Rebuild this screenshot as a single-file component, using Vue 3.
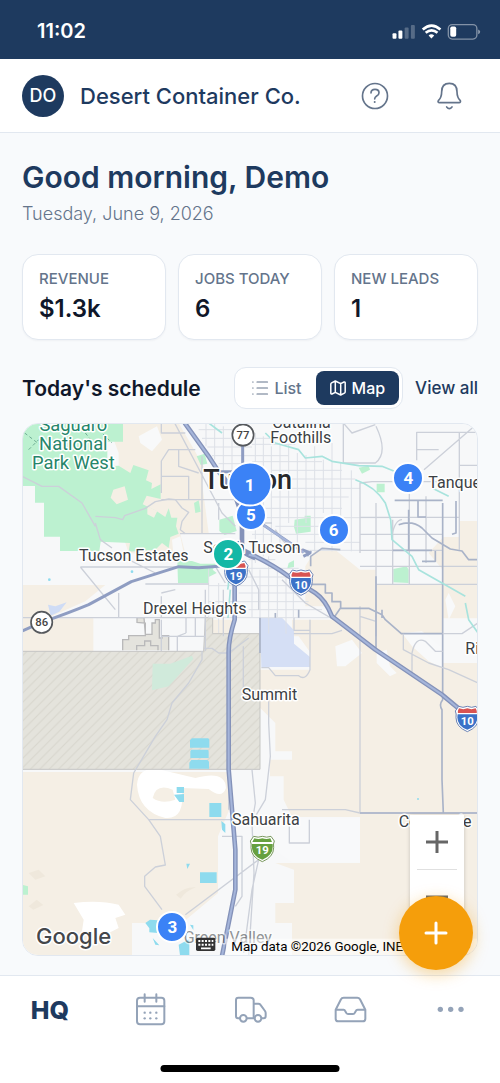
<script setup>
import { ref } from 'vue'

const view = ref('map')

const stats = [
  { label: 'REVENUE', value: '$1.3k' },
  { label: 'JOBS TODAY', value: '6' },
  { label: 'NEW LEADS', value: '1' },
]

// Pin positions are in map units (1368 x 1599).
const pins = [
  { n: 5, x: 687, y: 276 },
  { n: 1, x: 683, y: 183, big: true },
  { n: 2, x: 619, y: 392, done: true },
  { n: 4, x: 1159, y: 164 },
  { n: 6, x: 935, y: 320 },
  { n: 3, x: 451, y: 1512 },
]
const place = (p) => ({
  left: `${((p.x - 3) / 1362) * 100}%`,
  top: `${((p.y - 3) / 1593) * 100}%`,
})

const line = (vertical, at, from, to) =>
  vertical ? `M${at} ${from}V${to}` : `M${from} ${at}H${to}`
// [vertical?, position, from, to]
const streets = [
  [1, 700, 30, 420], [1, 724, 40, 400], [1, 748, 70, 385], [1, 774, 30, 385],
  [1, 800, 64, 300], [1, 826, 90, 385], [1, 852, 96, 300], [1, 878, 70, 385],
  [1, 904, 110, 270], [1, 930, 60, 385], [1, 956, 120, 300], [1, 988, 142, 385],
  [1, 552, 0, 70], [1, 578, 0, 110], [1, 604, 10, 150], [1, 630, 20, 150],
  [0, 20, 530, 690], [0, 46, 540, 760], [0, 72, 556, 690], [0, 98, 570, 800], [0, 122, 590, 690],
  [0, 64, 690, 820], [0, 116, 690, 900], [0, 142, 750, 960], [0, 168, 750, 1000],
  [0, 196, 800, 1014], [0, 222, 750, 980], [0, 256, 720, 960], [0, 284, 690, 1112],
  [0, 310, 760, 960], [0, 334, 690, 900], [0, 358, 850, 1014], [0, 382, 840, 1014],
  [1, 560, 430, 584], [1, 590, 480, 630], [1, 690, 400, 584], [1, 714, 440, 632],
  [1, 740, 400, 632], [1, 766, 430, 584], [1, 792, 460, 632], [1, 814, 490, 584],
  [0, 410, 680, 760], [0, 436, 600, 830], [0, 462, 670, 800], [0, 488, 560, 800],
  [0, 510, 650, 830], [0, 536, 560, 860], [0, 560, 680, 900], [0, 584, 560, 920],
].map((s) => line(...s)).join('')
</script>

<template>
  <div class="app">
    <div class="status">
      <span class="time">11:02</span>
      <svg class="status-icons" viewBox="1170 60 280 64" aria-hidden="true">
        <g fill="#fff">
          <rect x="1176" y="97" width="12" height="17" rx="3" />
          <rect x="1194" y="89" width="12" height="25" rx="3" />
          <rect x="1213" y="80" width="12" height="34" rx="3" opacity=".25" />
          <rect x="1232" y="72" width="12" height="42" rx="3" opacity=".25" />
          <rect x="1352" y="77" width="18" height="31" rx="5" />
          <path d="M1437 86q6 2 6 7t-6 7z" opacity=".5" />
          <path d="M1286 104q8-7 17 0l-8.500 9z" />
        </g>
        <rect x="1346" y="71" width="87" height="44" rx="12" fill="none" stroke="#fff" stroke-opacity=".45" stroke-width="4" />
        <path d="M1268 86q27-24 54 0M1277 96q18-15 36 0" fill="none" stroke="#fff" stroke-width="8" />
      </svg>
    </div>

    <header class="header">
      <span class="avatar">DO</span>
      <span class="company">Desert Container Co.</span>
      <button class="icon-btn" type="button" aria-label="Help">
        <svg viewBox="1080 243 90 90" aria-hidden="true">
          <circle cx="1125" cy="288" r="37.500" />
          <path d="M1113 279q0-11 12-11 12 0 12 10 0 6-7 10-6 4-6 9" />
          <circle class="dot" cx="1124" cy="306" r="3" />
        </svg>
      </button>
      <button class="icon-btn" type="button" aria-label="Notifications">
        <svg viewBox="1302 243 90 90" aria-hidden="true">
          <path d="M1319 308h58q6-1 4-6-10-10-10-27c0-17-9-25-23-25s-23 8-23 25q0 17-10 27-3 5 4 6zM1340 321q8 10 16 0" />
        </svg>
      </button>
    </header>

    <main class="main">
      <h1>Good morning, Demo</h1>
      <p class="date">Tuesday, June 9, 2026</p>

      <section class="stats">
        <div v-for="s in stats" :key="s.label" class="card">
          <span class="label">{{ s.label }}</span>
          <strong class="value">{{ s.value }}</strong>
        </div>
      </section>

      <div class="schedule">
        <h2>Today's schedule</h2>
        <div class="segment">
          <button type="button" :class="{ on: view === 'list' }" :aria-pressed="view === 'list'" @click="view = 'list'">
            <svg viewBox="0 0 16 16" aria-hidden="true">
              <path d="M5 2h10.500M5 8h10.500M5 14h10.500M.7 2h.4M.7 8h.4M.7 14h.4" />
            </svg>
            List
          </button>
          <button type="button" :class="{ on: view === 'map' }" :aria-pressed="view === 'map'" @click="view = 'map'">
            <svg viewBox="0 0 16 16" aria-hidden="true">
              <path d="M.8 4.200q0-1 .8-1.400L5.300 1l5.400 2.600L14 2q1.200-.4 1.200.8V11.800q0 .9-.8 1.300L10.700 15l-5.400-2.600L2 14q-1.200.4-1.200-.8zM5.300 1v11.400M10.700 3.600V15" />
            </svg>
            Map
          </button>
        </div>
        <a href="#all" class="view-all">View all</a>
      </div>

      <section class="map" aria-label="Job map">
        <svg class="map-art" viewBox="3 3 1362 1593" preserveAspectRatio="none">
          <defs>
            <pattern id="hatch" width="28" height="28" patternUnits="userSpaceOnUse">
              <rect width="28" height="28" fill="#e4e3dc" />
              <path d="M-7 7L7-7M0 28L28 0M21 35L35 21" stroke="#d8d6cd" stroke-width="3" />
            </pattern>
            <symbol id="interstate" viewBox="0 0 80 84">
              <path d="M14 4q13 6 26 0 13 6 26 0l10 14q-4 8-2 20 0 28-34 42Q6 66 6 38 8 26 4 18z" fill="#fff" stroke="#6c84b6" stroke-width="3" />
              <path d="M11 28h58q6 33-29 46Q5 61 11 28z" fill="#3b72c8" />
              <path d="M12 24q-2-5 3-14 13 5 25 0 12 5 25 0 5 9 3 14z" fill="#d85452" />
            </symbol>
          </defs>

          <rect width="1368" height="1599" fill="#f7f8f9" />

          <!-- desert -->
          <g fill="#f5efe5">
            <path d="M256 0H470L545 130 540 180 560 330H474L500 430 440 400 320 390 290 300V90Z" />
            <path d="M0 486H250L190 535Q100 575 0 620Z" />
            <path d="M0 586H214V684H0Z" />
            <path d="M878 384H944L1014 440H1062V492H1164V640L1190 660 1240 720H1368V1320H1338V1320H1020V1310H1014V1182H810L785 1130V1060H744V1010H810V985H760V900L690 830V740H866V690L830 640H810V590H935L920 550H850V430Z" />
            <path d="M1312 294H1368V586H1262V440L1220 390L1264 342H1312Z" />
            <path d="M1062 484H1262V632H1130L1062 590Z" />
            <path d="M0 1047H620L622 1160 588 1240V1410L480 1500H330V1599H0Z" />
            <path d="M760 1320H1368V1599H810V1500H760V1440H816V1340Z" />
            <path d="M566 590H630V635H575Z" />
          </g>
          <g fill="#f8f9fa">
            <path d="M350 40L405 10 420 50 390 85 355 60ZM450 350l25-10 10 50-30 12zM1270 530l10-20 20 40-20 40zM940 670l50-20 30 40-50 40h-25zM1140 630l60-5 60 50v60l-40-20-50-45zM1064 690l30-10 10 50 20 20-20 10-40-40z" />
            <path d="M345 1085Q350 1020 435 1045L520 1065Q610 1040 612 1095 600 1130 560 1098L480 1095Q490 1190 430 1185 350 1165 345 1085Z" fill="#fff" />
            <path d="M392 1125Q402 1080 452 1100L460 1130Q420 1145 392 1125Z" fill="#f5efe5" />
            <path d="M155 1440Q230 1430 290 1445L310 1475 280 1485 290 1515 250 1535 180 1525 185 1490Z" fill="#fff" />
            <path d="M1014 1190H1368V1320H1014Z" fill="#f5efe5" />
            <path d="M810 1186H1014V1318H810L745 1270V1186Z" />
          </g>
          <path d="M462 1415q30-25 60-22-30 10-46 34zM20 1350l30-10 20 20-30 10zM20 1450l24-20 20 16-30 14z" fill="#efe8dc" />

          <!-- parks -->
          <g fill="#bcf1d0">
            <path d="M0 0H303V56H256V130L290 128 325 150 334 126 380 142 372 172 390 180 388 198 416 184V228L374 218 362 244 400 262 430 282 440 256 448 284 466 284 462 310 470 332 445 342 440 375 420 360 400 380 320 386 324 360 236 356 232 384H114V341H66V239H39V189H0Z" />
            <path d="M466 414H510L535 422H582L572 440 584 450 560 462V480H468ZM516 240l14-8 6 34-16 4zM592 290l40-12 12 46-36 12-16-12zM524 100l24-8 8 30-20 4zM818 290l30-4v-8h18v48l-44 6-6-20zM1064 182h24v26h-24zM1010 134l30-6 4 12-24 12zM1114 438l40-8 6 10v40l-46-2zM800 420l16-8v20l-20 4zM0 1385l18 5v25H0z" />
          </g>
          <path d="M274 200l34-10 10 40-34 14-18-20zM376 250l30 14-10 20-20-10z" fill="#f5efe5" />
          <path d="M8 30L60 70M20 80l30-30M190 30l40 50M230 20l40 40" fill="none" stroke="#6fae94" stroke-width="3" stroke-dasharray="10 8" />

          <!-- reservation -->
          <path d="M0 685H545L550 584H572V632H714V1039H0Z" fill="url(#hatch)" stroke="#c5c5c3" stroke-width="3" />
          <path d="M302 682V650H320V638H370V600L345 598V584H366L370 634H390V600H400V590H412V645H420V638H440V682" fill="#e4e3dd" stroke="#b9b9ba" stroke-width="4" />
          <path d="M344 682V668H368V654H386V668H408V682" fill="none" stroke="#b9b9ba" stroke-width="4" />
          <path d="M392 722H445L510 698 514 708 440 790 390 802Z" fill="#d0eadb" />

          <path d="M714 584H780L816 622V662L864 702V732H718Z" fill="#d5dff5" />
          <path d="M78 545l22 5 34-12-22 28-26 12z" fill="#cfdcf5" />
          <path d="M510 946h47q5 0 5 6v22h-58v-22zM508 980h48q4 0 4 6v19h-55v-20zM508 1011h48q6 2 5 10v16h-59v-18zM464 1092h22v18h-22zM456 1115l30-2v24h-14zM562 1140h36v42h-36zM598 1194l12 10v26l-10-10zM534 1348h50v32h-50zM493 1322h11l-8 16zM370 1500l14-10 24 2v38l-26-2v-12zM392 1545l20 22-12-2zM470 1565l32-16v48h-28zM504 1505l10 2v14z" fill="#8edbee" />
          <g fill="#8edbee">
            <circle cx="82" cy="470" r="4" />
            <circle cx="330" cy="446" r="4" />
            <circle cx="1188" cy="1128" r="3" />
          </g>

          <!-- streets -->
          <path class="street" :d="streets" />
          <path class="road" d="M418 0V30H490M418 210V114L440 80H520M470 80V130L530 150M418 160H500V230M418 230H660M540 100V332H590M474 332H640M590 240V290M458 0L600 270 640 310M1014 390V180L1050 176H1368M1062 240V640M1112 290V484M1162 200V484M1212 220V420M1014 283H1312M1014 334H1262M1014 382H1262M1014 430H1368M1062 484H1368M964 0L990 30 1060 5M1062 10Q1100 90 1060 120H964V0M1184 112V28H1368M1312 28V380M1206 140L1368 0M1184 80H1250M1312 127H1368" />
          <path class="road" d="M290 510V584M175 432H550M175 432L280 560M0 584H550M370 483H560M418 510L460 500M418 584V520M290 395L400 450M418 590V684M466 640V684M466 640L492 630M492 630V584M520 584V640M420 640H550M550 500V684M604 500V640M664 670V830M815 632H930L960 622M816 584V622H866M864 590V740Q850 775 830 758H760L740 734H718M1014 550V1168M1014 580L1062 595M680 440L710 500V560M580 430L610 480M780 470L850 540 935 590" />
          <path class="road" d="M0 160L60 190 110 190 180 240 220 310" stroke="#98aab0" />
          <path class="road" d="M220 300L235 350 270 375" />
          <path class="road" d="M220 280L280 284 302 290 308 278 370 256 400 236 440 228 460 230 480 255 500 268 480 295 475 320 490 332" stroke="#a4b3c0" />
          <path class="road" d="M540 684V710L500 780 450 840 435 890 400 940 350 1025 335 1050 325 1130 380 1190 415 1240 430 1326 400 1332 368 1360V1390L420 1460M382 1190H630M545 676H570L590 690H620L680 645M620 1060V1160M690 1040L700 1140 690 1200 696 1350 680 1599M490 1475L710 1310 748 1280M740 830V900L745 1000 730 1130 700 1180M780 1160H970L1014 1170H1368M802 1190V1260H862V1190M600 1240H660V1420L640 1450M710 1310L690 1400 665 1590" />
          <path class="arterial" d="M1062 460V684M1262 240V830Q1250 845 1260 860V1070L1264 1170M1014 1170H1368M935 585L955 556H1040L1080 575 1090 590 1138 632H1262M1118 232H1262M1130 305Q1170 290 1200 315L1230 345 1285 378 1320 384 1340 410H1368M1112 382H1230M1160 260V382M1188 230V282H1212M1240 384V415H1200M866 430V400L900 376 955 380M868 384L856 400M850 484H910V510H930V536H956V555M1080 560V585M1302 234V330L1290 334M714 584V690M830 584V560M760 584V570" />
          <path class="road" d="M1144 632V680L1220 720 1280 740 1368 780M1170 760V690Q1180 640 1210 655L1240 685H1262M1262 632H1320L1368 600M1110 335Q1120 290 1140 290M760 320L780 350 800 370M710 300H750" stroke="#b3b9c6" />
          <path class="wash" d="M560 0L600 30M730 30L760 60 830 80 850 105 900 100 930 115 1010 128 1080 130 1130 150M1000 170Q1060 190 1090 240L1106 290 1110 350 1170 400 1190 440 1260 480 1330 520M1230 195L1280 220M617 500Q624 470 614 430M1330 540L1340 590 1368 630M625 500L618 585" />

          <!-- highways -->
          <g class="hwy">
            <path d="M0 624L59 598Q140 570 200 545L328 476L470 431L530 434L610 428M660 395V250M662 60V180M590 146H640" />
            <path d="M680 270L730 310 845 388M840 380l24 10-20 10" />
            <path d="M488 0L560 100 590 146Q640 200 660 280V380Q670 395 700 405M638 440V590Q619 650 620 690V1040L640 1280V1400L610 1550 600 1599M660 380L700 400Q760 430 800 460L880 510Q910 530 930 580L1060 680 1260 815 1350 890" class="major" />
          </g>
          <path class="hwy-mid" d="M488 0L560 100 590 146M638 440V590Q619 650 620 690V1040L640 1280V1400L610 1550 600 1599M680 395L700 400Q760 430 800 460L880 510Q910 530 930 580L1060 680 1260 815 1350 890M700 287L730 310 845 388" />

          <!-- shields -->
          <g class="round">
            <circle cx="663" cy="36" r="32" />
            <circle cx="59" cy="598" r="32" />
          </g>
          <use href="#interstate" x="602" y="410" width="80" height="84" />
          <use href="#interstate" x="797" y="437" width="80" height="84" />
          <use href="#interstate" x="1296" y="846" width="80" height="84" />
          <path d="M695 1240q14 5 26 0 13 5 26 0l10 14q-4 8-2 20 0 28-34 42-34-14-34-42 2-12-2-20z" fill="#fff" stroke="#79985e" stroke-width="3" />
          <path d="M697 1246q12 4 24 0 12 4 24 0l5 11h-59zM690 1263h62q4 34-31 47-35-13-31-47z" fill="#66a03f" />
          <g class="shield-text" text-anchor="middle">
            <text x="663" y="48" class="dark">77</text>
            <text x="59" y="610" class="dark">86</text>
            <text x="642" y="470">19</text>
            <text x="837" y="498">10</text>
            <text x="1336" y="906">10</text>
            <text x="721" y="1294">19</text>
          </g>

          <!-- places -->
          <g class="park-name" text-anchor="middle">
            <text x="154" y="23">Saguaro</text>
            <text x="154" y="80">National</text>
            <text x="154" y="137">Park West</text>
          </g>
          <text class="city" x="544" y="198">Tucson</text>
          <g class="place">
            <text x="751" y="14">Catalina</text>
            <text x="745" y="60">Foothills</text>
            <text x="1219" y="194">Tanque Verde</text>
            <text x="171" y="415">Tucson Estates</text>
            <text x="544" y="389">South Tucson</text>
            <text x="363" y="574">Drexel Heights</text>
            <text x="659" y="830">Summit</text>
            <text x="1330" y="693">Rincon</text>
            <text x="630" y="1206">Sahuarita</text>
            <text x="1130" y="1212">Corona de</text>
            <text x="485" y="1560" opacity=".55">Green Valley</text>
          </g>
          <text class="google" x="42" y="1562">Google</text>
          <g transform="translate(522 1544)">
            <rect width="58" height="40" rx="5" fill="#333" />
            <path d="M7 10h45M7 21h45" stroke="#fff" stroke-width="6" stroke-dasharray="6 4" />
            <path d="M15 32h29" stroke="#fff" stroke-width="5" />
          </g>
          <rect x="612" y="1547" width="756" height="52" fill="#fff" opacity=".55" />
          <text class="credit" x="628" y="1583">Map data ©2026 Google, INEGI</text>
        </svg>

        <button
          v-for="p in pins"
          :key="p.n"
          type="button"
          class="pin"
          :class="{ big: p.big, done: p.done }"
          :style="place(p)"
          :aria-label="`Job ${p.n}`"
        >{{ p.n }}</button>

        <div class="zoom">
          <button type="button" aria-label="Zoom in">
            <svg viewBox="0 0 22 22"><path d="M11 0v22M0 11h22" /></svg>
          </button>
          <button type="button" aria-label="Zoom out">
            <svg viewBox="0 0 22 22"><path d="M0 11h22" /></svg>
          </button>
        </div>
      </section>
    </main>

    <nav class="tabs">
      <a href="#hq" class="hq" aria-current="page">HQ</a>
      <a href="#calendar" aria-label="Calendar">
        <svg viewBox="402 72 96 96">
          <rect x="411" y="83" width="82" height="80" rx="9" />
          <path d="M411 109h82M434 73v22M469 73v22" />
          <g class="dot">
            <circle cx="434" cy="128" r="3.500" /><circle cx="451" cy="128" r="3.500" /><circle cx="469" cy="128" r="3.500" />
            <circle cx="434" cy="145" r="3.500" /><circle cx="451" cy="145" r="3.500" /><circle cx="469" cy="145" r="3.500" />
          </g>
        </svg>
      </a>
      <a href="#trucks" aria-label="Trucks">
        <svg viewBox="702 72 96 96">
          <path d="M719 145h-5q-6 0-6-7V90q0-7 7-7h37q9 0 9 8v53M741 145h22M761 101h14q4 0 6 3l14 19q2 3 2 6v9q0 7-6 7h-5" />
          <circle cx="730" cy="145" r="10" />
          <circle cx="774" cy="145" r="10" />
        </svg>
      </a>
      <a href="#inbox" aria-label="Inbox">
        <svg viewBox="1002 72 96 96">
          <path d="M1007 119v27q0 8 8 8h73q8 0 8-8v-27l-16-31q-3-5-8-5h-41q-6 0-8 5zM1007 119h24q3 0 4 3l4 7q2 3 5 3h15q4 0 5-3l4-7q1-3 5-3h23" />
        </svg>
      </a>
      <a href="#more" aria-label="More">
        <svg viewBox="1302 72 96 96">
          <g class="dot">
            <circle cx="1321" cy="118" r="8" /><circle cx="1352" cy="118" r="8" /><circle cx="1383" cy="118" r="8" />
          </g>
        </svg>
      </a>
      <span class="home"></span>
    </nav>

    <button class="fab" type="button" aria-label="New job">
      <svg viewBox="0 0 22 22"><path d="M11 1v20M1 11h20" /></svg>
    </button>
  </div>
</template>

<style>
body {
  background: #f8fafc;
}
</style>

<style scoped>
.app {
  display: flex;
  flex-direction: column;
  min-height: 100vh;
  background: #f8fafc;
  color: #0f172a;
  font-family: Inter, "Liberation Sans", sans-serif;
}
* {
  box-sizing: border-box;
}
button {
  font: inherit;
  border: 0;
  padding: 0;
  background: none;
  cursor: pointer;
}
h1,
h2,
p {
  margin: 0;
}
svg {
  display: block;
  overflow: visible;
}
.status {
  display: flex;
  align-items: center;
  justify-content: space-between;
  height: 59px;
  padding: 3px 17px 0 37px;
  background: #1e3a5f;
  color: #fff;
}
.time {
  font-size: 20px;
  font-weight: 600;
}
.status-icons {
  width: 93px;
  height: 21px;
}
.header {
  display: flex;
  align-items: center;
  gap: 16px;
  height: 74px;
  padding: 0 22px;
  background: #fff;
  border-bottom: 1px solid #e2e8f0;
}
.avatar {
  display: grid;
  place-items: center;
  width: 42px;
  height: 42px;
  border-radius: 50%;
  background: #1e3a5f;
  color: #fff;
  font-size: 18px;
  font-weight: 500;
}
.company {
  flex: 1;
  color: #1e3a5f;
  font-size: 22px;
  font-weight: 500;
  white-space: nowrap;
}
.icon-btn {
  display: grid;
  place-items: center;
  width: 58px;
  height: 44px;
}
.icon-btn svg {
  width: 30px;
  height: 30px;
  fill: none;
  stroke: #64748b;
  stroke-width: 5;
  stroke-linecap: round;
  stroke-linejoin: round;
}
.icon-btn .dot {
  fill: #64748b;
  stroke: none;
}
.main {
  flex: 1;
  padding: 24px 22px 19px;
}
h1 {
  color: #1e3a5f;
  font-size: 30px;
  line-height: 40px;
  font-weight: 600;
}
.date {
  margin-top: 5px;
  color: #64748b;
  font-size: 18px;
  line-height: 24px;
  font-weight: 300;
}
.stats {
  display: grid;
  grid-template-columns: repeat(3, 1fr);
  gap: 12px;
  margin-top: 28px;
}
.card {
  display: flex;
  flex-direction: column;
  gap: 4px;
  padding: 14px 16px;
  border: 1px solid #e2e8f0;
  border-radius: 16px;
  background: #fff;
  box-shadow: 0 1px 2px rgba(15, 23, 42, 0.04);
}
.label {
  color: #64748b;
  font-size: 15px;
  line-height: 20px;
  font-weight: 500;
  white-space: nowrap;
}
.value {
  font-size: 24px;
  line-height: 32px;
  font-weight: 600;
}
.schedule {
  display: flex;
  align-items: center;
  gap: 12px;
  margin-top: 27px;
}
h2 {
  flex: 1;
  font-size: 21px;
  font-weight: 600;
  white-space: nowrap;
}
.segment {
  display: flex;
  height: 42px;
  padding: 3px;
  border: 1px solid #e2e8f0;
  border-radius: 12px;
  background: #fff;
}
.segment button {
  display: flex;
  align-items: center;
  gap: 6px;
  padding: 0 14px;
  border-radius: 8px;
  color: #64748b;
  font-size: 16px;
  font-weight: 500;
}
.segment svg {
  width: 16px;
  height: 16px;
  fill: none;
  stroke: currentColor;
  stroke-width: 1.2;
  stroke-linecap: round;
  stroke-linejoin: round;
}
.segment .on {
  background: #1e3a5f;
  color: #fff;
}
.segment .on svg {
  stroke-width: 1.5;
}
.view-all {
  color: #1e3a5f;
  font-size: 17px;
  font-weight: 500;
  text-decoration: none;
  white-space: nowrap;
}
.map {
  position: relative;
  height: 533px;
  margin-top: 14px;
  border: 1px solid #e2e8f0;
  border-radius: 16px;
  overflow: hidden;
  font-family: Roboto, sans-serif;
}
.map-art {
  width: 100%;
  height: 100%;
}
.street,
.road,
.arterial,
.wash,
.hwy,
.hwy-mid {
  fill: none;
  stroke-linejoin: round;
}
.street {
  stroke: #dde0e7;
  stroke-width: 3;
}
.road {
  stroke: #ccd0d9;
  stroke-width: 4;
}
.arterial {
  stroke: #a9b3c8;
  stroke-width: 5;
}
.wash {
  stroke: #a8e3dd;
  stroke-width: 5;
}
.hwy {
  stroke: #8f9dc2;
  stroke-width: 9;
}
.hwy .major {
  stroke: #8492b9;
  stroke-width: 14;
}
.hwy-mid {
  stroke: #a5b5da;
  stroke-width: 6;
}
.round circle {
  fill: #fff;
  stroke: #55585c;
  stroke-width: 5;
}
.shield-text text {
  fill: #fff;
  font-size: 34px;
  font-weight: 700;
}
.shield-text .dark {
  fill: #444;
  font-weight: 500;
}
.park-name,
.place,
.city,
.google {
  paint-order: stroke;
  stroke: #fff;
  stroke-width: 9;
  stroke-linejoin: round;
}
.park-name {
  fill: #26856a;
  font-size: 55px;
}
.place {
  fill: #3c3f44;
  font-size: 48px;
}
.city {
  fill: #26282b;
  font-size: 81px;
  font-weight: 500;
}
.google {
  fill: #44474b;
  font-family: Inter, sans-serif;
  font-size: 66px;
  font-weight: 500;
}
.credit {
  fill: #000;
  font-size: 40px;
}
.pin {
  position: absolute;
  display: grid;
  place-items: center;
  width: 32px;
  height: 32px;
  border: 2px solid #fff;
  border-radius: 50%;
  background: #3b82f6;
  color: #fff;
  font-size: 17px;
  font-weight: 700;
  transform: translate(-50%, -50%);
}
.pin.big {
  width: 45px;
  height: 45px;
}
.pin.done {
  background: #14b8a6;
}
.zoom {
  position: absolute;
  right: 13px;
  bottom: 32px;
  width: 54px;
  background: #fff;
  box-shadow: 0 1px 4px rgba(0, 0, 0, 0.2);
}
.zoom button {
  display: grid;
  place-items: center;
  width: 100%;
  height: 54px;
}
.zoom button + button::before {
  content: "";
  width: 40px;
  height: 1px;
  background: #e0e0e0;
}
.zoom button + button {
  align-content: space-between;
  padding-bottom: 15px;
}
.zoom svg {
  width: 22px;
  height: 22px;
  fill: none;
  stroke: #666;
  stroke-width: 3;
}
.tabs {
  position: relative;
  display: grid;
  grid-template-columns: repeat(5, 1fr);
  align-items: center;
  justify-items: center;
  height: 108px;
  padding: 0 0 39px;
  border-top: 1px solid #e2e8f0;
  background: #fff;
}
.tabs svg {
  width: 32px;
  height: 32px;
  fill: none;
  stroke: #94a3b8;
  stroke-width: 6;
  stroke-linecap: round;
  stroke-linejoin: round;
}
.tabs .dot {
  fill: #94a3b8;
  stroke: none;
}
.hq {
  color: #1e3a5f;
  font-size: 25px;
  font-weight: 800;
  text-decoration: none;
}
.home {
  position: absolute;
  bottom: 11px;
  left: 50%;
  width: 179px;
  height: 7px;
  border-radius: 4px;
  background: #000;
  transform: translateX(-50%);
}
.fab {
  position: fixed;
  right: 27px;
  bottom: 113px;
  display: grid;
  place-items: center;
  width: 74px;
  height: 74px;
  border-radius: 50%;
  background: #f59e0b;
  box-shadow: 0 4px 16px rgba(245, 158, 11, 0.4);
}
.fab svg {
  width: 22px;
  height: 22px;
  fill: none;
  stroke: #fff;
  stroke-width: 3;
  stroke-linecap: round;
}
</style>
